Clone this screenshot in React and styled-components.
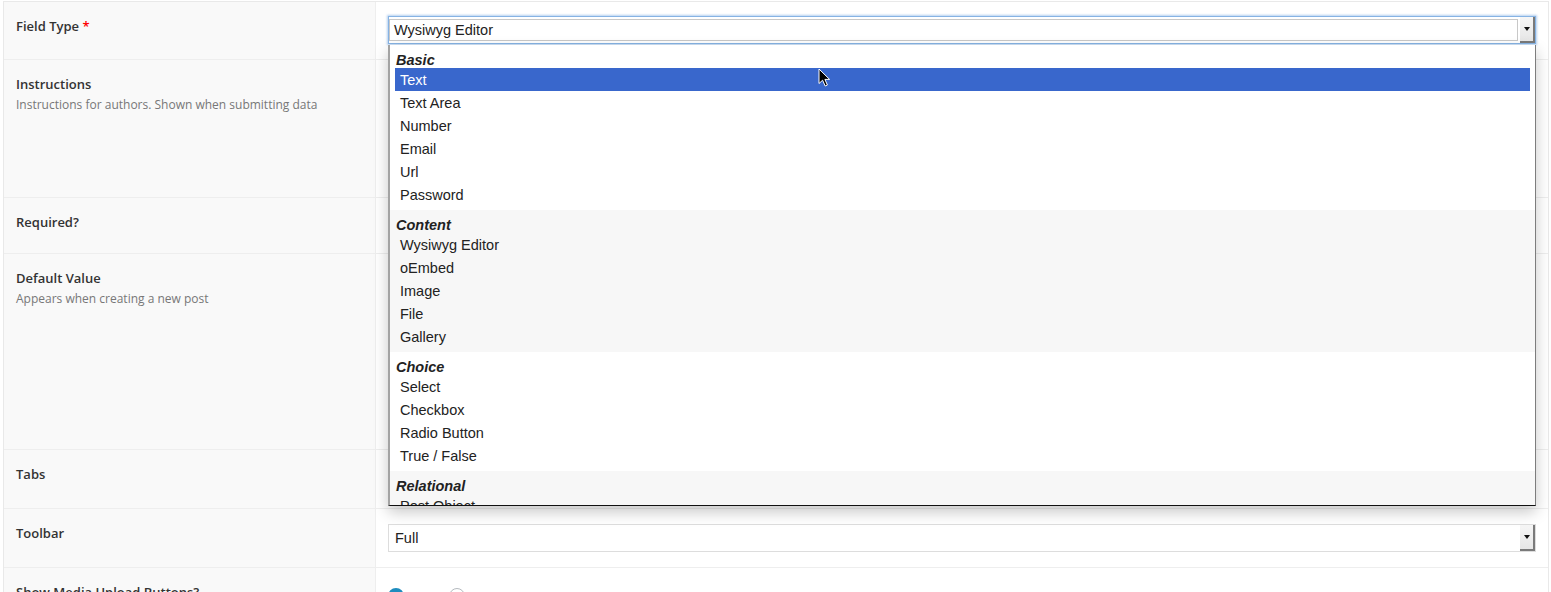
import React from 'react';
import styled, { createGlobalStyle } from 'styled-components';

const GlobalStyle = createGlobalStyle`
  html, body {
    margin: 0;
    padding: 0;
    background: #fff;
  }
  body {
    font-family: "Open Sans", "Liberation Sans", sans-serif;
    overflow: hidden;
  }
`;

const Table = styled.div`
  box-sizing: border-box;
  width: 1546px;
  margin: 1px 0 0 3px;
  border: 1px solid #e9e9e9;
  border-bottom: 0;
`;

const Row = styled.div`
  display: grid;
  grid-template-columns: 372px 1fr;
  min-height: ${(p) => p.$h}px;
  border-bottom: 1px solid #eeeeee;
`;

const LabelCell = styled.div`
  box-sizing: border-box;
  background: #f9f9f9;
  border-right: 1px solid #eeeeee;
  padding: 15px 12px;
`;

const ValueCell = styled.div`
  box-sizing: border-box;
  padding: ${(p) => (p.$tight ? '14px 12px 15px' : '15px 12px')};
`;

const Label = styled.div`
  font-size: 13px;
  font-weight: 600;
  line-height: 18px;
  color: #333;

  span {
    color: #f00;
  }
`;

const Description = styled.p`
  margin: 3px 0 0;
  font-size: 12px;
  line-height: 18px;
  color: #777;
`;

const SelectWrap = styled.div`
  position: relative;
`;

const SelectBox = styled.div`
  box-sizing: border-box;
  height: 28px;
  display: flex;
  background: #fff;
  border: 1px solid ${(p) => (p.$focused ? '#86b3e4' : '#dddddd')};
  box-shadow: ${(p) => (p.$focused ? '0 0 2px 1px rgba(90, 150, 220, 0.45)' : 'none')};
  font-family: "Liberation Sans", Arial, sans-serif;
  font-size: 14.5px;
  color: #222;
`;

const SelectValue = styled.div`
  flex: 1;
  display: flex;
  align-items: center;
  padding-left: ${(p) => (p.$focused ? '4px' : '5px')};
  border: 1px solid ${(p) => (p.$focused ? '#c8c8c8' : 'transparent')};
  margin: ${(p) => (p.$focused ? '2px 2px 2px 0' : '0')};
`;

const ArrowButton = styled.div`
  box-sizing: border-box;
  width: 15px;
  background: linear-gradient(#f6f6f6, #e6e6e6);
  border-right: 2px solid #7a7a7a;
  border-bottom: 2px solid #7a7a7a;
  display: flex;
  align-items: center;
  justify-content: center;

  &::after {
    content: '';
    border-left: 3px solid transparent;
    border-right: 3px solid transparent;
    border-top: 4px solid #111;
  }
`;

const Popup = styled.div`
  position: absolute;
  top: calc(100% + 1px);
  left: 0;
  right: 0;
  height: 460px;
  overflow: hidden;
  background: #fff;
  border-left: 2px solid #a3a3a3;
  border-right: 1px solid #7d7d7d;
  border-bottom: 1px solid #111;
  box-shadow: 0 6px 14px rgba(0, 0, 0, 0.22);
  z-index: 10;
  font-family: "Liberation Sans", Arial, sans-serif;
  font-size: 14.5px;
  color: #222;
`;

const Group = styled.div`
  background: ${(p) => (p.$shade ? '#f7f7f7' : '#fff')};
  padding-bottom: 4px;
`;

const GroupHeader = styled.div`
  height: 23px;
  display: flex;
  align-items: flex-end;
  padding: 0 0 0 6px;
  box-sizing: border-box;
  font-weight: 700;
  font-style: italic;
  line-height: 16px;
`;

const Option = styled.div`
  height: 23px;
  display: flex;
  align-items: center;
  margin: 0 5px;
  padding-left: 5px;
  background: ${(p) => (p.$active ? '#3967cc' : 'transparent')};
  color: ${(p) => (p.$active ? '#fff' : '#222')};
`;

const Cursor = styled.svg`
  position: absolute;
  left: 428px;
  top: 23px;
  width: 13px;
  height: 19px;
`;

const RadioList = styled.div`
  display: flex;
  gap: 18px;
  padding-top: 4px;
`;

const RadioItem = styled.label`
  display: flex;
  align-items: center;
  gap: 6px;
  font-size: 13px;
  color: #444;
`;

const RadioDot = styled.span`
  box-sizing: border-box;
  width: 16px;
  height: 16px;
  border-radius: 50%;
  border: ${(p) => (p.$on ? '5px solid #1e8cbe' : '1px solid #b4b9be')};
  background: #fff;
`;

const groups = [
  { name: 'Basic', options: ['Text', 'Text Area', 'Number', 'Email', 'Url', 'Password'] },
  { name: 'Content', options: ['Wysiwyg Editor', 'oEmbed', 'Image', 'File', 'Gallery'] },
  { name: 'Choice', options: ['Select', 'Checkbox', 'Radio Button', 'True / False'] },
  { name: 'Relational', options: ['Post Object', 'Page Link', 'Relationship', 'Taxonomy', 'User'] },
];

function Select({ value, focused, children }) {
  return (
    <SelectWrap>
      <SelectBox $focused={focused}>
        <SelectValue $focused={focused}>{value}</SelectValue>
        <ArrowButton />
      </SelectBox>
      {children}
    </SelectWrap>
  );
}

function FieldTypePopup() {
  return (
    <Popup>
      {groups.map((g, gi) => (
        <Group key={g.name} $shade={gi % 2 === 1}>
          <GroupHeader>{g.name}</GroupHeader>
          {g.options.map((o) => (
            <Option key={o} $active={o === 'Text'}>
              {o}
            </Option>
          ))}
        </Group>
      ))}
      <Cursor viewBox="0 0 13 19">
        <path
          d="M1 1 L1 15.5 L4.6 12.2 L7.2 18 L9.4 17 L6.9 11.4 L11.6 11.4 Z"
          fill="#000"
          stroke="#fff"
          strokeWidth="1"
          strokeLinejoin="round"
        />
      </Cursor>
    </Popup>
  );
}

export default function App() {
  return (
    <>
      <GlobalStyle />
      <Table>
        <Row $h={57}>
          <LabelCell>
            <Label>
              Field Type <span>*</span>
            </Label>
          </LabelCell>
          <ValueCell $tight>
            <Select value="Wysiwyg Editor" focused>
              <FieldTypePopup />
            </Select>
          </ValueCell>
        </Row>
        <Row $h={137}>
          <LabelCell>
            <Label>Instructions</Label>
            <Description>Instructions for authors. Shown when submitting data</Description>
          </LabelCell>
          <ValueCell />
        </Row>
        <Row $h={55}>
          <LabelCell>
            <Label>Required?</Label>
          </LabelCell>
          <ValueCell />
        </Row>
        <Row $h={195}>
          <LabelCell>
            <Label>Default Value</Label>
            <Description>Appears when creating a new post</Description>
          </LabelCell>
          <ValueCell />
        </Row>
        <Row $h={58}>
          <LabelCell>
            <Label>Tabs</Label>
          </LabelCell>
          <ValueCell />
        </Row>
        <Row $h={58}>
          <LabelCell>
            <Label>Toolbar</Label>
          </LabelCell>
          <ValueCell>
            <Select value="Full" />
          </ValueCell>
        </Row>
        <Row $h={58}>
          <LabelCell>
            <Label>Show Media Upload Buttons?</Label>
          </LabelCell>
          <ValueCell>
            <RadioList>
              <RadioItem>
                <RadioDot $on />
                Yes
              </RadioItem>
              <RadioItem>
                <RadioDot />
                No
              </RadioItem>
            </RadioList>
          </ValueCell>
        </Row>
      </Table>
    </>
  );
}
